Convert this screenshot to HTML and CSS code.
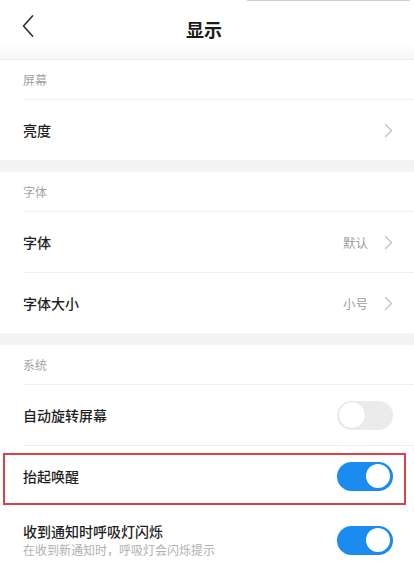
FILE: index.html
```html
<!DOCTYPE html>
<html lang="zh-CN">
<head>
<meta charset="utf-8">
<title>显示</title>
<link rel="stylesheet" href="styles.css">
</head>
<body>
<div class="page">
  <div class="edge"></div>
  <header class="header">
    <span class="back">
      <svg width="12" height="22" viewBox="0 0 12 22"><path d="M10.5 1 L1.5 11 L10.5 21" fill="none" stroke="#333" stroke-width="1.7" stroke-linecap="round" stroke-linejoin="round"/></svg>
    </span>
    <h1 class="title">显示</h1>
    <span></span>
  </header>

  <section class="group">
    <div class="label"><span>屏幕</span></div>
    <div class="row last"><span class="name">亮度</span>
      <span class="right"><svg class="chev" width="9" height="15" viewBox="0 0 9 15"><path d="M1.5 1.5 L7.5 7.5 L1.5 13.5" fill="none" stroke="#c2c2c2" stroke-width="1.4" stroke-linecap="round" stroke-linejoin="round"/></svg></span>
    </div>
  </section>
  <div class="band"></div>

  <section class="group">
    <div class="label"><span>字体</span></div>
    <div class="row"><span class="name">字体</span>
      <span class="right"><span class="value">默认</span><svg class="chev" width="9" height="15" viewBox="0 0 9 15"><path d="M1.5 1.5 L7.5 7.5 L1.5 13.5" fill="none" stroke="#c2c2c2" stroke-width="1.4" stroke-linecap="round" stroke-linejoin="round"/></svg></span>
    </div>
    <div class="row last"><span class="name">字体大小</span>
      <span class="right"><span class="value">小号</span><svg class="chev" width="9" height="15" viewBox="0 0 9 15"><path d="M1.5 1.5 L7.5 7.5 L1.5 13.5" fill="none" stroke="#c2c2c2" stroke-width="1.4" stroke-linecap="round" stroke-linejoin="round"/></svg></span>
    </div>
  </section>
  <div class="band"></div>

  <section class="group">
    <div class="label"><span>系统</span></div>
    <div class="row"><span class="name">自动旋转屏幕</span>
      <span class="switch"><span class="knob"></span></span>
    </div>
    <div class="highlight">
      <div class="row last"><span class="name">抬起唤醒</span>
        <span class="switch on"><span class="knob"></span></span>
      </div>
    </div>
    <div class="row last tall">
      <div class="texts">
        <div class="name">收到通知时呼吸灯闪烁</div>
        <div class="sub">在收到新通知时，呼吸灯会闪烁提示</div>
      </div>
      <span class="switch on"><span class="knob"></span></span>
    </div>
  </section>
</div>
</body>
</html>
```

FILE: styles.css
```css
* { box-sizing: border-box; }
html, body { margin: 0; padding: 0; background: #fff; }
body {
  font-family: "Noto Sans CJK SC", "Noto Sans", sans-serif;
  color: #1f1f1f;
  overflow: hidden;
}
.page { width: 414px; }

.edge {
  height: 1px;
  margin-left: 247px;
  width: 163px;
  background: #cfcfcf;
}

.header {
  height: 59px;
  display: grid;
  grid-template-columns: 60px 1fr 60px;
  align-items: center;
  background: linear-gradient(#fff 0%, #fff 72%, #f6f6f6 100%);
  border-bottom: 1px solid #ececec;
}
.back {
  padding-left: 22px;
  display: flex;
  align-self: start;
  margin-top: 14px;
}
.title {
  margin: 0 0 2px 0;
  text-align: center;
  font-size: 18px;
  font-weight: 600;
  color: #1a1a1a;
  padding-right: 6px;
  line-height: 24px;
}

.label {
  margin-left: 23px;
  height: 40px;
  display: flex;
  align-items: center;
  border-bottom: 1px solid #efefef;
  font-size: 12px;
  color: #a3a3a3;
}

.row {
  margin-left: 23px;
  padding-right: 21px;
  height: 61px;
  display: flex;
  align-items: center;
  justify-content: space-between;
  border-bottom: 1px solid #efefef;
}
.row.last { border-bottom: none; height: 60px; }
.row.tall { height: 68px; }

.name {
  font-size: 14px;
  line-height: 20px;
  font-weight: 500;
  color: #1f1f1f;
}
.right { display: flex; align-items: center; gap: 16px; }
.value { font-size: 12.5px; color: #a0a0a0; }
.chev { display: block; }

.band { height: 12px; background: #f4f4f4; }

.texts { display: flex; flex-direction: column; }
.texts .name { line-height: 19px; height: 19px; overflow: visible; }
.sub { font-size: 12px; line-height: 17px; height: 17px; color: #b0b0b0; }

.switch {
  width: 56px;
  height: 29px;
  border-radius: 15px;
  background: #ebebeb;
  display: flex;
  align-items: center;
  padding: 0 2px;
}
.knob {
  width: 26px;
  height: 26px;
  border-radius: 50%;
  background: #fff;
  box-shadow: 0 0 0 0.5px #dcdcdc;
}
.switch.on { background: #1a8cf0; justify-content: flex-end; }
.switch.on .knob {
  width: 24px;
  height: 24px;
  margin-right: 1px;
  box-shadow: none;
}

.highlight { position: relative; }
.highlight::after {
  content: "";
  position: absolute;
  left: 3px;
  right: 8px;
  top: 7px;
  bottom: 1px;
  border: 2px solid #d8434b;
  pointer-events: none;
}
```
